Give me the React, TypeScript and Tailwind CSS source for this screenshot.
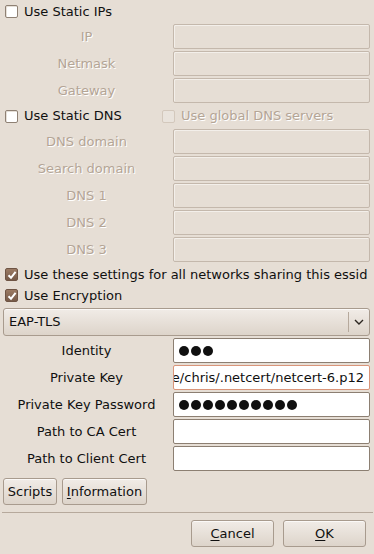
import type { ReactNode } from "react";

const FONT = "font-['DejaVu_Sans','Liberation_Sans',sans-serif]";
const DIM = "text-[#b4a596] [text-shadow:1px_1px_0_#ffffff]";

function CheckBox({ checked, disabled }: { checked?: boolean; disabled?: boolean }) {
  if (checked) {
    return (
      <span className="flex h-[13px] w-[13px] items-center justify-center rounded-[2px] border border-[#6e5444] bg-gradient-to-b from-[#9b7a63] to-[#765a48]">
        <svg width="10" height="10" viewBox="0 0 10 10">
          <path d="M1.5 5.2 L4 7.8 L8.6 1.8" fill="none" stroke="#fff" strokeWidth="2" />
        </svg>
      </span>
    );
  }
  return (
    <span
      className={
        disabled
          ? "h-[13px] w-[13px] rounded-[2px] border border-[#d3c8bc] bg-[#e9e3dc]"
          : "h-[13px] w-[13px] rounded-[2px] border border-[#8f8174] bg-white shadow-[inset_1px_1px_0_#e6e0d8]"
      }
    />
  );
}

function CheckRow({ label, checked, className = "" }: { label: string; checked?: boolean; className?: string }) {
  return (
    <div className={"flex h-[21px] items-center pl-[1px] " + className}>
      <CheckBox checked={checked} />
      <span className="ml-[6px] text-[13px] text-[#101010]">{label}</span>
    </div>
  );
}

function Field({ label, disabled, children, focused }: { label: string; disabled?: boolean; children?: ReactNode; focused?: boolean }) {
  let box = "rounded-[2px] border border-[#8c7f72] bg-white";
  if (disabled) box = "rounded-[2px] border border-[#c4b8ac] bg-[#e6ded5] shadow-[inset_1px_1px_0_#f3efea]";
  if (focused) box = "rounded-[2px] border border-[#d9957a] bg-white";
  return (
    <div className="flex h-[25px] items-center">
      <div className={"w-[165px] text-center text-[13px] " + (disabled ? DIM : "text-[#101010]")}>{label}</div>
      <div className={"ml-[4px] flex h-[25px] w-[197px] items-center overflow-hidden px-[4px] " + box}>{children}</div>
    </div>
  );
}

function Dots({ n }: { n: number }) {
  return (
    <div className="flex gap-[2px] pl-[1px]">
      {Array.from({ length: n }).map((_, i) => (
        <span key={i} className="h-[10px] w-[10px] rounded-full bg-[#101010]" />
      ))}
    </div>
  );
}

function Btn({ children, className = "" }: { children: ReactNode; className?: string }) {
  return (
    <div
      className={
        "flex h-[27px] items-center justify-center rounded-[3px] border border-[#a89b8e] bg-gradient-to-b from-[#f1ece7] to-[#ddd4ca] text-[13px] text-[#101010] shadow-[inset_0_1px_0_#fbf9f7] " +
        className
      }
    >
      {children}
    </div>
  );
}

export default function App() {
  return (
    <div className={"h-[554px] w-[374px] overflow-hidden bg-[#e6ded5] " + FONT}>
      <div className="flex flex-col pt-[1px] pr-[4px] pl-[4px]">
        <CheckRow label="Use Static IPs" />
        <div className="mt-[2px] flex flex-col gap-[2px]">
          <Field label="IP" disabled />
          <Field label="Netmask" disabled />
          <Field label="Gateway" disabled />
        </div>
        <div className="mt-[2px] flex h-[22px] items-center">
          <div className="flex w-[158px] items-center pl-[1px]">
            <CheckBox />
            <span className="ml-[6px] text-[13px] text-[#101010]">Use Static DNS</span>
          </div>
          <CheckBox disabled />
          <span className={"ml-[6px] text-[13px] " + DIM}>Use global DNS servers</span>
        </div>
        <div className="mt-[2px] flex flex-col gap-[2px]">
          <Field label="DNS domain" disabled />
          <Field label="Search domain" disabled />
          <Field label="DNS 1" disabled />
          <Field label="DNS 2" disabled />
          <Field label="DNS 3" disabled />
        </div>
        <CheckRow label="Use these settings for all networks sharing this essid" checked className="mt-[2px] whitespace-nowrap" />
        <CheckRow label="Use Encryption" checked />
        <div className="mt-[2px] -ml-[1px] flex h-[28px] w-[367px] items-center rounded-[3px] border border-[#a89b8e] bg-gradient-to-b from-[#f1ece7] to-[#ddd4ca] shadow-[inset_0_1px_0_#fbf9f7]">
          <span className="flex-1 pl-[5px] text-[13px] text-[#101010]">EAP-TLS</span>
          <span className="h-[20px] w-px bg-[#b6a99c]" />
          <span className="flex w-[20px] justify-center">
            <svg width="10" height="6" viewBox="0 0 10 6">
              <path d="M1 1 L5 5 L9 1" fill="none" stroke="#2c2620" strokeWidth="1.4" />
            </svg>
          </span>
        </div>
        <div className="mt-[2px] flex flex-col gap-[2px]">
          <Field label="Identity">
            <Dots n={3} />
          </Field>
          <Field label="Private Key" focused>
            <div className="-mr-[2px] flex w-full justify-end whitespace-nowrap text-[13px] text-[#101010]">
              <span>home/chris/.netcert/netcert-6.p12</span>
              <span className="ml-[1px] h-[16px] w-px bg-[#101010]" />
            </div>
          </Field>
          <Field label="Private Key Password">
            <Dots n={10} />
          </Field>
          <Field label="Path to CA Cert" />
          <Field label="Path to Client Cert" />
        </div>
        <div className="mt-[7px] -ml-[1px] flex gap-[5px]">
          <Btn className="w-[54px]">Scripts</Btn>
          <Btn className="w-[85px]">
            <span className="underline decoration-1 underline-offset-2">I</span>nformation
          </Btn>
        </div>
      </div>
      <div className="mt-[7px] ml-[2px] h-[2px] w-[371px] border-t border-[#b6a99c] border-b-white" />
      <div className="mt-[6px] flex justify-end gap-[9px] pr-[8px]">
        <Btn className="w-[83px]">
          <span className="underline decoration-1 underline-offset-2">C</span>ancel
        </Btn>
        <Btn className="w-[83px]">
          <span className="underline decoration-1 underline-offset-2">O</span>K
        </Btn>
      </div>
    </div>
  );
}
